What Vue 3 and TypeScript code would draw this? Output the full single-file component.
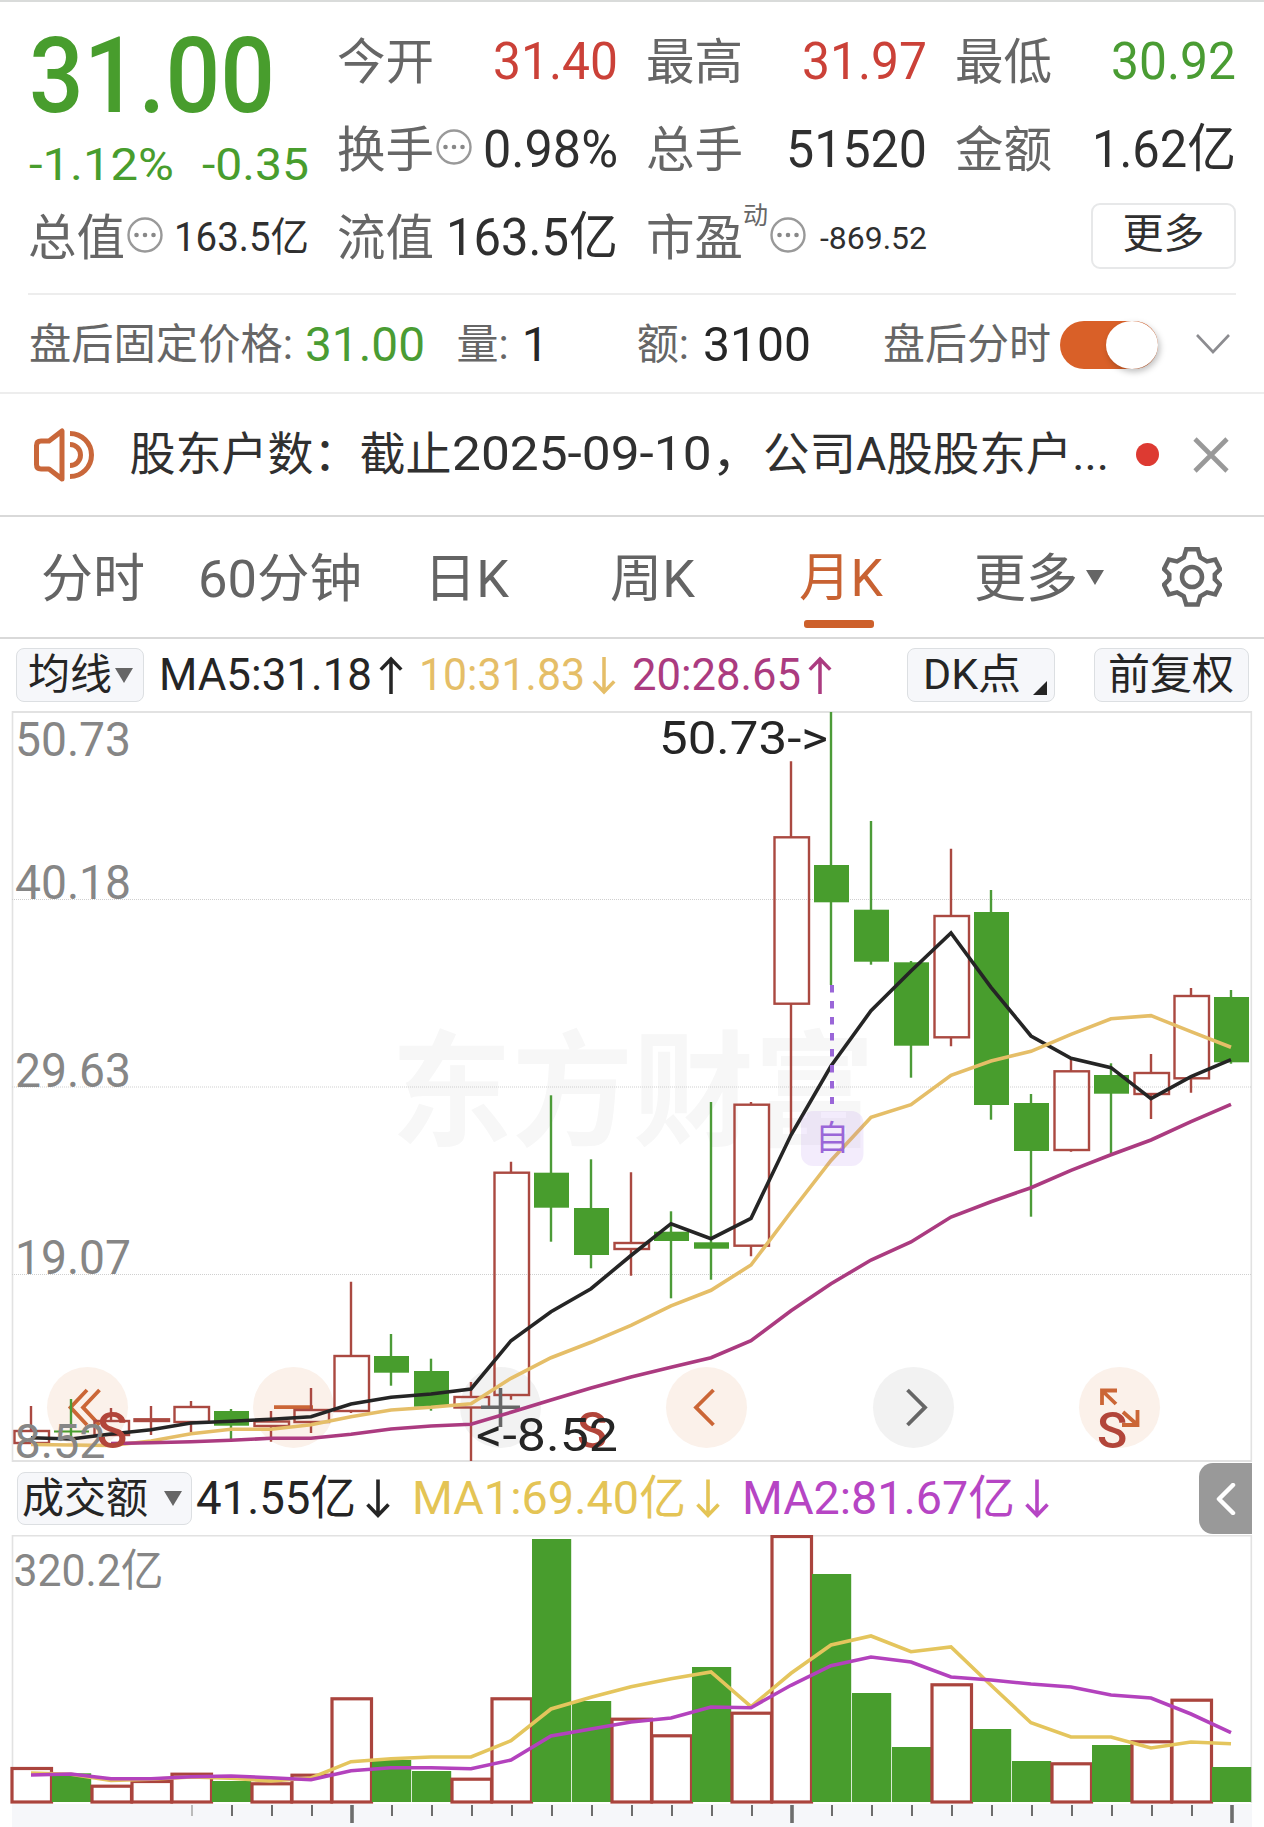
<script setup lang="ts">
import type { Directive } from 'vue'

type Candle = { up: boolean; top: number; bottom: number; high: number; low: number }
type Point = [number, number]

const STEP = 40
const FIRST = 31
const cx = (i: number): number => FIRST + i * STEP

/* Condenses a run of text horizontally so that it fills the given width. */
const vFit: Directive<HTMLElement, number> = {
  mounted(el, { value }) {
    const natural = el.getBoundingClientRect().width
    el.style.transform = `scaleX(${value / natural})`
    el.style.marginRight = `${value - natural}px`
  },
}

const c = (kind: 'r' | 'g', top: number, bottom: number, high: number, low: number): Candle => ({
  up: kind === 'r', top, bottom, high, low,
})

const candles: Candle[] = [
  c('r', 1431, 1443, 1406, 1444), c('g', 1430.5, 1432.5, 1399, 1437), c('r', 1421, 1435, 1408, 1436),
  c('r', 1419.3, 1421, 1406, 1435), c('r', 1407, 1422, 1401, 1432), c('g', 1411, 1425.7, 1409, 1440),
  c('r', 1421.5, 1426, 1411, 1441.7), c('r', 1410, 1422, 1388, 1433), c('r', 1356, 1411, 1281.7, 1413),
  c('g', 1356, 1372.7, 1334, 1385.7), c('g', 1371, 1406.7, 1358.7, 1410.7), c('r', 1397, 1407.5, 1382, 1461),
  c('r', 1172.7, 1395, 1161.7, 1399.7), c('g', 1172.7, 1207.7, 1095.3, 1241.7), c('g', 1208, 1255, 1159.3, 1268.3),
  c('r', 1243, 1249, 1172.3, 1275.7), c('g', 1231.7, 1241, 1211.3, 1298.3), c('g', 1242.3, 1248.7, 1102, 1279.7),
  c('r', 1104.7, 1245.7, 1102, 1256.3), c('r', 837.3, 1003.7, 761.3, 1135), c('g', 865, 902.3, 712, 985),
  c('g', 909.7, 961.7, 821, 964.7), c('g', 962.3, 1045.7, 961, 1077.7), c('r', 916, 1037.3, 848.7, 1046.3),
  c('g', 912, 1105, 890, 1119.7), c('g', 1103, 1151, 1094, 1216.7), c('r', 1071.3, 1150, 1058.3, 1151.7),
  c('g', 1075, 1093.7, 1063.3, 1153.3), c('r', 1073, 1094, 1054, 1119), c('r', 996, 1078.3, 988, 1092.7),
  c('g', 997, 1062.3, 990, 1063.7),
]

const line = (ys: number[], start = 0): string =>
  ys.map((y, i): Point => [cx(i + start), y]).map((p) => p.join(',')).join(' ')

const ma5 = line([1437.7, 1439, 1434, 1429.7, 1423, 1421.3, 1419.3, 1416.7, 1404, 1397.3, 1394, 1389, 1340.7, 1311.7, 1288.7, 1255.5, 1223.7, 1238.7, 1218.3, 1135, 1066, 1010.7, 971, 933, 987.3, 1036, 1058.3, 1067.7, 1098.7, 1076.7, 1059.7])
const ma10 = line([1444.5, 1445, 1445.5, 1441, 1433.7, 1429.3, 1429.3, 1424.7, 1416.7, 1410, 1407.3, 1403.7, 1378.3, 1357.7, 1342.3, 1325.3, 1305.8, 1290.3, 1265, 1212, 1160.5, 1117.3, 1104.7, 1075.3, 1061, 1051.3, 1034.3, 1018.7, 1015.7, 1031.7, 1047.3])
const ma20 = line([1443.5, 1442.7, 1441.7, 1440.3, 1438.3, 1438.3, 1434.3, 1429, 1426, 1424.3, 1412.3, 1400, 1388, 1377, 1367.3, 1357.7, 1340.7, 1310.7, 1283.8, 1260, 1242, 1217, 1201.7, 1187.7, 1170.3, 1154.7, 1140, 1121.7, 1104.3], 2)

const BASE = 1802
const volumeTops: number[] = [1767, 1773.3, 1784.7, 1780, 1772.7, 1781, 1782.3, 1773.7, 1697.3, 1760, 1771, 1777.7, 1697.3, 1539, 1701, 1717.7, 1734.3, 1667, 1711.7, 1535, 1574, 1693, 1747, 1683.3, 1729, 1761, 1762.3, 1745, 1740.3, 1698.7, 1767]
const volumeUp: boolean[] = [...'rgrrrgrrrggrrggrrgrrgggrggrgrrg'].map((k) => k === 'r')
const volMa1 = line([1773, 1774.3, 1780.5, 1779.3, 1777, 1778.3, 1781, 1778, 1761.7, 1758.7, 1757, 1757, 1740.7, 1709, 1697.3, 1686.7, 1678.7, 1672, 1706.7, 1673.3, 1645, 1636, 1651.7, 1647, 1685.3, 1722.7, 1737, 1737, 1748, 1742, 1743.7])
const volMa2 = line([1775, 1774, 1778.7, 1778.7, 1776.7, 1776, 1777.7, 1779.7, 1770.7, 1767.7, 1767.7, 1768.7, 1760, 1736, 1729, 1722, 1718, 1707, 1707.7, 1685.3, 1665.7, 1657, 1662, 1677, 1680, 1684, 1687, 1695, 1698, 1714, 1732.7])

const ticks = Array.from({ length: 27 }, (_, i) => i + 4)
const yearTicks = [8, 19, 30]
const priceLabels = [
  { text: '50.73', y: 755.5 }, { text: '40.18', y: 898.5 }, { text: '29.63', y: 1086.5 }, { text: '19.07', y: 1273.5 },
]
const navButtons = [
  { x: 87.5, grey: false }, { x: 293.5, grey: false }, { x: 500.5, grey: true },
  { x: 706.5, grey: false }, { x: 913.5, grey: true }, { x: 1119.5, grey: false },
]
</script>

<template>
  <main class="page">
    <section class="quote">
      <div class="price">
        <div class="last"><span v-fit="246" class="t">31.00</span></div>
        <div class="change"><span v-fit="145" class="t">-1.12%</span><span v-fit="107" class="t">-0.35</span></div>
      </div>
      <div class="cell"><label>今开</label><span v-fit="125" class="t red">31.40</span></div>
      <div class="cell"><label>最高</label><span v-fit="125" class="t red">31.97</span></div>
      <div class="cell"><label>最低</label><span v-fit="125" class="t green">30.92</span></div>
      <div class="cell">
        <label>换手</label>
        <svg class="more" viewBox="0 0 36 36"><circle cx="18" cy="18" r="16.5" /><path d="M9.5 18h.01M18 18h.01M26.5 18h.01" /></svg>
        <span v-fit="135" class="t">0.98%</span>
      </div>
      <div class="cell"><label>总手</label><span v-fit="141" class="t">51520</span></div>
      <div class="cell"><label>金额</label><span v-fit="144" class="t">1.62亿</span></div>
      <div class="cell">
        <label>总值</label>
        <svg class="more" viewBox="0 0 36 36"><circle cx="18" cy="18" r="16.5" /><path d="M9.5 18h.01M18 18h.01M26.5 18h.01" /></svg>
        <span v-fit="135" class="t mid">163.5亿</span>
      </div>
      <div class="cell"><label>流值</label><span v-fit="172" class="t">163.5亿</span></div>
      <div class="cell">
        <label>市盈</label><sup>动</sup>
        <svg class="more" viewBox="0 0 36 36"><circle cx="18" cy="18" r="16.5" /><path d="M9.5 18h.01M18 18h.01M26.5 18h.01" /></svg>
        <span v-fit="107" class="t small">-869.52</span>
      </div>
      <div class="cell end"><button class="more-btn">更多</button></div>
    </section>

    <section class="after">
      <span v-fit="264" class="t muted">盘后固定价格:</span><span v-fit="120" class="t val green a1">31.00</span>
      <span class="muted a2">量:</span><span class="t val a3">1</span>
      <span class="muted a4">额:</span><span v-fit="108" class="t val a5">3100</span>
      <span class="muted a6">盘后分时</span>
      <span class="toggle"><i></i></span>
      <svg class="chev" viewBox="0 0 36 22"><path d="M2 2l16 17L34 2" /></svg>
    </section>

    <section class="notice">
      <svg class="speaker" viewBox="0 0 62 54">
        <path d="M29 3v48L16 41H8q-4.500 0-4.500-4.500v-19Q3.500 13 8 13h8z" />
        <path d="M37 16.500a10.500 10.500 0 0 1 0 21M37 5.500a21.500 21.500 0 0 1 0 43" />
      </svg>
      <div class="headline">
        <span v-fit="322" class="t">股东户数：截止</span><span v-fit="311" class="t date">2025-09-10，</span><span v-fit="346" class="t">公司A股股东户...</span>
      </div>
      <i class="dot"></i>
      <svg class="close" viewBox="0 0 36 36"><path d="M2 2l32 32M34 2L2 34" /></svg>
    </section>

    <nav class="tabs">
      <span class="tab t1">分时</span>
      <span v-fit="164" class="t tab t2">60分钟</span>
      <span v-fit="85" class="t tab t3">日K</span>
      <span v-fit="85" class="t tab t4">周K</span>
      <span class="t5"><span v-fit="84" class="t active">月K</span><i></i></span>
      <span class="tab t6">更多</span>
      <svg class="tri" viewBox="0 0 18 15"><path d="M0 0h18L9 15z" /></svg>
      <svg class="gear" viewBox="0 0 60 62">
        <path d="M24 3h12l2.500 8.500 7 4 8.500-2 5 10-5.500 5.500v5l5.500 5.500-5 10-8.500-2-7 4L36 60H24l-2.500-8.500-7-4-8.500 2-5-10L6.500 34v-5L1 23.500l5-10 8.500 2 7-4z" transform="translate(1 .4) scale(.968)" />
        <circle cx="30" cy="31" r="10" />
      </svg>
    </nav>

    <section class="indicators">
      <span class="chip c1">均线<svg class="tri dark" viewBox="0 0 18 15"><path d="M0 0h18L9 15z" /></svg></span>
      <span v-fit="213" class="t m1">MA5:31.18</span>
      <svg class="arrow k" viewBox="0 0 24 40"><path d="M12 39V3M1.500 14L12 3l10.500 11" /></svg>
      <span v-fit="166" class="t m2 amber">10:31.83</span>
      <svg class="arrow amber" viewBox="0 0 24 40"><path d="M12 1v36M1.500 26L12 37l10.500-11" /></svg>
      <span v-fit="169" class="t m3 plum">20:28.65</span>
      <svg class="arrow plum" viewBox="0 0 24 40"><path d="M12 39V3M1.500 14L12 3l10.500 11" /></svg>
      <span class="chip c2"><span v-fit="98" class="t">DK点</span><svg class="corner" viewBox="0 0 14 14"><path d="M14 0v14H0z" /></svg></span>
      <span class="chip c3">前复权</span>
    </section>

    <svg class="chart" width="1264" height="751" viewBox="0 711 1264 751">
      <text class="mark" x="391" y="1136" textLength="484" lengthAdjust="spacingAndGlyphs">东方财富</text>
      <g class="frame">
        <path d="M12 712H1252M12 1461H1252" stroke-width="2" />
        <path d="M12.500 711V1462M1251.300 711V1462" stroke-width="1.600" />
        <path class="dots" d="M12 899.500H1251M12 1087H1251M12 1274.500H1251" />
      </g>
      <circle v-for="b in navButtons" :key="b.x" :cx="b.x" cy="1407.400" r="40.500" :fill="b.grey ? '#f2f2f2' : '#fbf1ea'" />
      <text v-for="l in priceLabels" :key="l.text" class="axis" x="15" :y="l.y" textLength="116" lengthAdjust="spacingAndGlyphs">{{ l.text }}</text>
      <g class="icon">
        <path d="M87 1390L70.500 1407.400 87 1425M99.500 1390L83 1407.400 99.500 1425" />
        <path d="M274 1407.200H313" />
        <path d="M713.500 1390L696 1407.400 713.500 1425" />
        <path class="grey" d="M907.500 1390L925 1407.400 907.500 1425" />
        <path d="M1102 1405V1390.500H1117M1102.500 1391L1116 1404M1137.500 1410V1425H1122M1137 1424.500L1123 1412" />
      </g>
      <g v-for="(k, i) in candles" :key="i" :class="k.up ? 'rise' : 'fall'">
        <path v-if="k.up" :d="`M${cx(i)} ${k.high}V${k.top}M${cx(i)} ${k.bottom}V${k.low}`" />
        <path v-else :d="`M${cx(i)} ${k.high}V${k.low}`" />
        <rect v-if="k.up" :x="cx(i) - 16.500" :y="k.top" width="34.500" :height="k.bottom - k.top" />
        <rect v-else :x="cx(i) - 17" :y="k.top" width="35" :height="k.bottom - k.top" />
      </g>
      <path class="plus" d="M481 1407.200H520M500.500 1388V1427" />
      <polyline class="ma" stroke="#252525" :points="ma5" />
      <polyline class="ma" stroke="#e5be68" :points="ma10" />
      <polyline class="ma" stroke="#ab3b80" :points="ma20" />
      <rect x="801" y="1111" width="62.500" height="55" rx="12" fill="#9a5fe6" fill-opacity=".12" />
      <path d="M832 985V1104" stroke="#9a66d8" stroke-width="4" stroke-dasharray="7.500 8.500" />
      <text class="self" x="832.300" y="1150" text-anchor="middle">自</text>
      <text class="axis" x="14.500" y="1457.500" textLength="91" lengthAdjust="spacingAndGlyphs">8.52</text>
      <g class="signal">
        <text x="97" y="1447.500">S</text><text x="577" y="1447.500">S</text><text x="1097" y="1447.500">S</text>
      </g>
      <text class="note" x="659" y="754" textLength="169" lengthAdjust="spacingAndGlyphs">50.73-&gt;</text>
      <text class="note" x="476" y="1451" textLength="142" lengthAdjust="spacingAndGlyphs">&lt;-8.52</text>
    </svg>

    <section class="turnover">
      <span class="chip c4">成交额<svg class="tri dark" viewBox="0 0 18 15"><path d="M0 0h18L9 15z" /></svg></span>
      <span v-fit="160" class="t v1">41.55亿</span>
      <svg class="arrow k" viewBox="0 0 24 40"><path d="M12 1v36M1.500 26L12 37l10.500-11" /></svg>
      <span v-fit="274" class="t v2 gold">MA1:69.40亿</span>
      <svg class="arrow gold" viewBox="0 0 24 40"><path d="M12 1v36M1.500 26L12 37l10.500-11" /></svg>
      <span v-fit="273" class="t v3 violet">MA2:81.67亿</span>
      <svg class="arrow violet" viewBox="0 0 24 40"><path d="M12 1v36M1.500 26L12 37l10.500-11" /></svg>
      <span class="drawer"><svg viewBox="0 0 20 32"><path d="M17 2L3 16l14 14" /></svg></span>
    </section>

    <svg class="chart" width="1264" height="292" viewBox="0 1535 1264 292">
      <rect x="12" y="1804" width="1240" height="23" fill="#f6f7fa" />
      <g class="frame">
        <path d="M12 1535.500H1252" stroke-width="2" />
        <path d="M12.500 1535V1803M1251.300 1535V1803" stroke-width="1.600" />
      </g>
      <text class="axis vol" x="13.500" y="1585.500" textLength="150" lengthAdjust="spacingAndGlyphs">320.2亿</text>
      <g v-for="(y, i) in volumeTops" :key="i">
        <rect v-if="volumeUp[i]" class="bar-up" :x="cx(i) - 19" :y="y + 1.500" width="39.500" :height="BASE - y - 1.500" />
        <rect v-else class="bar-down" :x="cx(i) - 19" :y="y" width="39.200" :height="BASE - y" />
      </g>
      <polyline class="ma" stroke="#e4c55d" :points="volMa1" />
      <polyline class="ma" stroke="#b342bd" :points="volMa2" />
      <path v-for="t in ticks" :key="t" :d="`M${cx(t) + 1} 1805v${yearTicks.includes(t) ? 18 : 11}`"
        :stroke="t === 4 ? '#bbb' : '#6d6d6d'" :stroke-width="yearTicks.includes(t) ? 3.6 : 2" />
    </svg>
  </main>
</template>

<style>
body { margin: 0; background: #fff; }
</style>

<style scoped>
.page {
  width: 1264px;
  height: 1827px;
  overflow: hidden;
  box-sizing: border-box;
  background: #fff;
  color: #2f2f2f;
  font-family: Roboto, "Noto Sans CJK SC", sans-serif;
  border-top: 2px solid #d9dbda;
}
.page svg { display: block; flex: none; fill: none; }
.t { display: inline-block; transform-origin: 0 50%; white-space: nowrap; flex: none; }
.red { color: #cb4138; }
.green { color: #4a9c33; }

.quote {
  display: grid;
  grid-template-columns: repeat(4, 281px);
  grid-template-rows: repeat(3, 88px);
  column-gap: 28px;
  padding: 16px 0 11px;
  margin: 0 28px;
  border-bottom: 2px solid #ededed;
}
.price { grid-row: span 2; color: #489d2d; }
.last { height: 117px; line-height: 117px; font-size: 105px; font-weight: 500; padding-left: 1px; }
.change { display: flex; justify-content: space-between; height: 59px; line-height: 59px; font-size: 45px; padding-left: 1px; }
.cell { display: flex; align-items: center; justify-content: space-between; font-size: 52px; line-height: 88px; height: 88px; }
.cell label { font-size: 48.500px; color: #666; flex: none; padding-top: 2px; }
.cell .mid { font-size: 40px; }
.cell .small { font-size: 32px; }
.cell sup { align-self: flex-start; height: 40px; line-height: 44px; font-size: 25px; color: #666; vertical-align: baseline; }
.cell.end { justify-content: flex-end; }
.more { width: 36px; height: 36px; margin: 0 0 6px 2px; }
.more circle { stroke: #999; stroke-width: 2.4; }
.more path { stroke: #888; stroke-width: 4.600; stroke-linecap: round; }
.cell .more + .t { margin-left: auto; }
.more-btn {
  width: 145px; height: 66px; margin: 0 0 5px; padding: 0 0 3px; border: 2px solid #e7e8e9; border-radius: 9px; background: #fff;
  font: 41px/58px Roboto, "Noto Sans CJK SC", sans-serif; color: #2f2f2f;
}

.after {
  display: flex; align-items: center; height: 97px; padding-left: 28.500px;
  border-bottom: 2px solid #ededed; font-size: 42px; line-height: 94px;
}
.after .muted, .after .val { padding-top: 3px; }
.muted { color: #666; white-space: nowrap; flex: none; }
.val { font-size: 48px; color: #262626; }
.val.green { color: #4a9c33; }
.a1 { margin-left: 12px; }
.a2 { margin-left: 32px; }
.a3 { margin-left: 13px; width: 28px; }
.a4 { margin-left: 87px; }
.a5 { margin-left: 14px; }
.a6 { margin-left: 72px; }
.toggle { width: 98px; height: 48px; margin: 3px 0 0 9px; border-radius: 24px; background: #d96028; display: flex; justify-content: flex-end; flex: none; }
.toggle i { width: 52px; height: 48px; border-radius: 50%; background: #fff; box-shadow: 2px 3px 6px rgba(0, 0, 0, .25); }
.chev { width: 36px; height: 22px; margin-left: 37px; }
.chev path { stroke: #8c8c90; stroke-width: 2.600; }

.notice { display: flex; align-items: center; height: 121px; padding-left: 33px; border-bottom: 2px solid #d9d9d9; }
.speaker { width: 62px; height: 54px; }
.speaker path { stroke: #c9673a; stroke-width: 5; stroke-linejoin: round; }
.headline { display: flex; align-items: baseline; width: 981px; flex: none; font-size: 46px; line-height: 116px; margin-left: 34.500px; padding-bottom: 2px; color: #303030; }
.headline .date { font-size: 48px; }
.dot { width: 23px; height: 23px; border-radius: 50%; background: #dd3a32; margin-left: 25px; flex: none; }
.close { width: 36px; height: 36px; margin-left: 34px; }
.close path { stroke: #999; stroke-width: 4.600; }

.tabs { display: flex; align-items: center; height: 120px; border-bottom: 2px solid #d9d9d9; color: #646464; }
.tab { font-size: 52px; line-height: 110px; padding-top: 5px; white-space: nowrap; flex: none; }
.t1 { margin-left: 41px; }
.t2 { margin-left: 53px; }
.t3 { margin-left: 62px; }
.t4 { margin-left: 101px; }
.t5 { display: flex; flex-direction: column; height: 120px; margin-left: 104px; }
.t5 .active { color: #c86232; height: 103px; font-size: 52px; line-height: 124px; }
.t5 i { width: 70px; height: 8px; border-radius: 3px; background: #cd602b; margin-left: 5px; }
.t6 { margin-left: 91px; }
.tri { width: 18px; height: 15px; margin-left: 8px; }
.tri path { fill: #666; }
.gear { width: 60px; height: 62px; margin-left: 58px; }
.gear path, .gear circle { stroke: #666; stroke-width: 4.600; }

.indicators, .turnover { display: flex; align-items: center; font-size: 44.500px; }
.indicators { height: 72px; line-height: 72px; color: #252525; }
.chip {
  display: flex; align-items: center; box-sizing: border-box; height: 54px; flex: none;
  border: 1.500px solid #dcdfe2; border-radius: 8px; background: #f6f7fa; color: #252525;
  font-size: 42px; line-height: 50px; white-space: nowrap;
}
.c1 { width: 128px; margin-left: 16px; padding-left: 11px; }
.c1 .tri { margin-left: 3px; }
.m1 { margin-left: 14.500px; }
.m2, .m3 { margin-left: 16px; }
.arrow { width: 24px; height: 39px; margin-left: 7px; }
.arrow path { stroke: currentColor; stroke-width: 3.600; }
.k { color: #252525; }
.amber { color: #e5be68; }
.plum { color: #ab3b80; }
.gold { color: #e4c455; }
.violet { color: #b645c4; }
.c2 { width: 148px; margin-left: auto; padding-left: 15px; }
.corner { width: 14px; height: 14px; margin: 25px 0 0 12px; }
.corner path { fill: #252525; }
.c3 { width: 155px; margin: 0 15px 0 39px; padding-left: 13px; }

.chart text { font-family: Roboto, "Noto Sans CJK SC", sans-serif; }
.mark { font-size: 125px; font-weight: 700; fill: #f7f7f7; }
.frame { stroke: #e2e2e2; }
.dots { stroke: #cfcfcf; stroke-width: 1; stroke-dasharray: 1 1; }
.chart .axis { font-size: 47.500px; fill: #868686; }
.chart .vol { font-size: 44px; }
.icon { stroke: #cb6636; stroke-width: 3.800; }
.icon .grey { stroke: #666; }
.plus { stroke: #666; stroke-width: 3.600; }
.rise { stroke: #aa4941; stroke-width: 2.400; }
.fall { stroke: #4c9b38; stroke-width: 2.400; }
.fall rect { fill: #489d2d; stroke: none; }
.ma { stroke-width: 3.600; }
.self { font-size: 34px; fill: #9a66d8; }
.signal { font-size: 50px; font-weight: 500; fill: #b2453a; }
.chart .note { font-size: 47px; fill: #252525; }
.bar-up { fill: #fff; stroke: #aa443d; stroke-width: 3.200; }
.bar-down { fill: #489d2d; }

.turnover { height: 73px; line-height: 71px; color: #252525; font-size: 47px; }
.turnover .t { padding-bottom: 2px; }
.c4 { width: 175px; height: 53px; margin-left: 17px; padding-left: 4px; }
.c4 .tri { margin-left: 16px; }
.v1 { margin-left: 4px; }
.v2 { margin-left: 22px; }
.v3 { margin-left: 22px; }
.turnover .arrow { height: 41px; margin-left: 10px; }
.drawer {
  display: flex; align-items: center; justify-content: center; width: 53px; height: 71px; margin: 0 12px 0 auto;
  border-radius: 14px 0 0 14px; background: #999;
}
.drawer svg { width: 20px; height: 32px; }
.drawer path { stroke: #fff; stroke-width: 4.500; stroke-linecap: round; stroke-linejoin: round; }
</style>
